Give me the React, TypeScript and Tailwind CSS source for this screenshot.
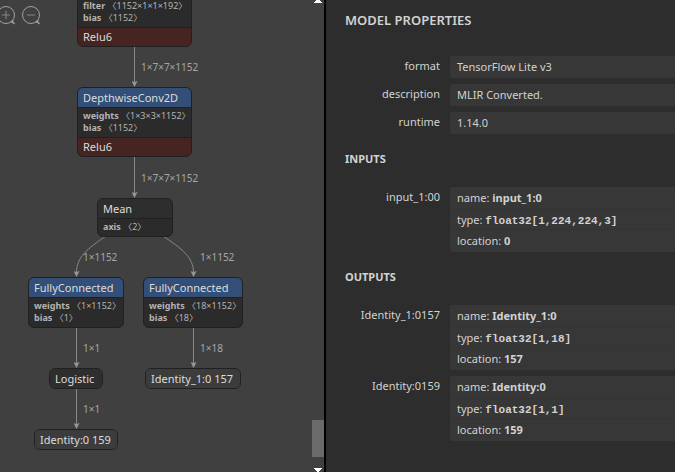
import type { ReactNode } from 'react';

interface Attribute {
  name: string;
  shape: string;
}

interface GraphNode {
  id: string;
  type?: string;
  box: string;
  header?: string;
  attributes: Attribute[];
  activation?: string;
}

const nodes: GraphNode[] = [
  {
    id: 'conv',
    box: 'left-[77px] top-[-4px] w-[115px]',
    attributes: [
      { name: 'filter', shape: '1152×1×1×192' },
      { name: 'bias', shape: '1152' },
    ],
    activation: 'Relu6',
  },
  {
    id: 'depthwise',
    type: 'DepthwiseConv2D',
    box: 'left-[77px] top-[87px] w-[115px]',
    header: 'bg-[#334f78]',
    attributes: [
      { name: 'weights', shape: '1×3×3×1152' },
      { name: 'bias', shape: '1152' },
    ],
    activation: 'Relu6',
  },
  {
    id: 'mean',
    type: 'Mean',
    box: 'left-[97px] top-[198px] w-[76px]',
    header: 'bg-[#2e2e2e]',
    attributes: [{ name: 'axis', shape: '2' }],
  },
  {
    id: 'fc1',
    type: 'FullyConnected',
    box: 'left-[28px] top-[277px] w-[96px]',
    header: 'bg-[#334f78]',
    attributes: [
      { name: 'weights', shape: '1×1152' },
      { name: 'bias', shape: '1' },
    ],
  },
  {
    id: 'fc2',
    type: 'FullyConnected',
    box: 'left-[143px] top-[277px] w-[100px]',
    header: 'bg-[#334f78]',
    attributes: [
      { name: 'weights', shape: '18×1152' },
      { name: 'bias', shape: '18' },
    ],
  },
  {
    id: 'logistic',
    type: 'Logistic',
    box: 'left-[49px] top-[368px] w-[54px]',
    header: 'bg-[#2e2e2e]',
    attributes: [],
  },
  {
    id: 'out1',
    type: 'Identity_1:0 157',
    box: 'left-[145px] top-[368px] w-[96px]',
    header: 'bg-[#3c3c3c]',
    attributes: [],
  },
  {
    id: 'out0',
    type: 'Identity:0 159',
    box: 'left-[34px] top-[429px] w-[84px]',
    header: 'bg-[#3c3c3c]',
    attributes: [],
  },
];

const edges = [
  { d: 'M134.5 46V83', label: '1×7×7×1152', x: 141, y: 71 },
  { d: 'M134.5 157V194', label: '1×7×7×1152', x: 141, y: 182 },
  { d: 'M106 236C87 249 76.5 257 76.5 273', label: '1×1152', x: 83, y: 261 },
  { d: 'M163 236C182 249 193.5 257 193.5 273', label: '1×1152', x: 200, y: 261 },
  { d: 'M76.5 327V364', label: '1×1', x: 83, y: 352 },
  { d: 'M193.5 327V364', label: '1×18', x: 200, y: 352 },
  { d: 'M76.5 388V425', label: '1×1', x: 83, y: 413 },
];

const properties = [
  { name: 'format', value: 'TensorFlow Lite v3' },
  { name: 'description', value: 'MLIR Converted.' },
  { name: 'runtime', value: '1.14.0' },
];

const inputs = [{ label: 'input_1:00', name: 'input_1:0', type: 'float32[1,224,224,3]', location: '0' }];

const outputs = [
  { label: 'Identity_1:0157', name: 'Identity_1:0', type: 'float32[1,18]', location: '157' },
  { label: 'Identity:0159', name: 'Identity:0', type: 'float32[1,1]', location: '159' },
];

function NodeBox({ node }: { node: GraphNode }) {
  return (
    <div
      className={`absolute overflow-hidden rounded-md border border-[#202020] bg-[#2b2b2b] whitespace-nowrap ${node.box}`}
    >
      {node.type && (
        <div className={`h-[19px] px-[5px] text-[11px] leading-[19px] text-[#dcdcdc] ${node.header}`}>{node.type}</div>
      )}
      {node.attributes.length > 0 && (
        <div className="border-t border-[#202020] px-[5px] pt-[2px] pb-[3px] text-[9px] leading-3 text-[#b4b4b4]">
          {node.attributes.map((attr) => (
            <div key={attr.name}>
              <b>{attr.name}</b> 〈{attr.shape}〉
            </div>
          ))}
        </div>
      )}
      {node.activation && (
        <div className="h-[19px] border-t border-[#202020] bg-[#462421] px-[5px] text-[11px] leading-[18px] text-[#dcdcdc]">
          {node.activation}
        </div>
      )}
    </div>
  );
}

function ZoomButton({ label, plus }: { label: string; plus?: boolean }) {
  return (
    <button type="button" aria-label={label} className="size-[25px]">
      <svg viewBox="0 0 25 25" className="size-full" fill="none" stroke="#a0a0a0">
        <circle cx="12" cy="12" r="8.5" />
        <path d={plus ? 'M8 12h8M12 8v8' : 'M8 12h8'} stroke="#868686" />
        <path d="M16.5 19.5L19.5 17.5M18 18.5l2.5 2.5" strokeWidth="1.5" />
      </svg>
    </button>
  );
}

function Graph() {
  return (
    <section className="relative min-w-0 flex-1 overflow-hidden">
      <svg className="absolute inset-0 size-full" fill="none">
        <defs>
          <marker id="arrow" viewBox="0 0 6 6" refX="2" refY="3" markerWidth="6" markerHeight="6" orient="auto">
            <path d="M0 0L6 3L0 6L1 3z" fill="#969696" />
          </marker>
        </defs>
        {edges.map((edge) => (
          <g key={edge.d}>
            <path d={edge.d} stroke="#888888" markerEnd="url(#arrow)" />
            <text x={edge.x} y={edge.y} className="fill-[#a6a6a6] text-[10px]">
              {edge.label}
            </text>
          </g>
        ))}
      </svg>
      {nodes.map((node) => (
        <NodeBox key={node.id} node={node} />
      ))}
      <div className="absolute top-[3px] left-[-6px] flex">
        <ZoomButton label="Zoom in" plus />
        <ZoomButton label="Zoom out" />
      </div>
    </section>
  );
}

function Scrollbar() {
  return (
    <div className="flex w-3 shrink-0 flex-col items-center justify-between">
      <svg viewBox="0 0 8 4" className="h-1 w-2 fill-white">
        <path d="M2 0h4v1h1v1h1v1H0V2h1V1h1z" />
      </svg>
      <div className="flex w-full flex-col items-center">
        <div className="mb-[11px] h-[37px] w-full bg-[#6b6b6b]" />
        <svg viewBox="0 0 8 4" className="h-1 w-2 fill-white">
          <path d="M0 0h8v1H7v1H6v1H5v1H3V3H2V2H1V1H0z" />
        </svg>
      </div>
    </div>
  );
}

function Row({ label, children }: { label: string; children: ReactNode }) {
  return (
    <div className="mb-1.5 flex">
      <dt className="mr-2.5 w-[95px] shrink-0 text-right leading-5">{label}</dt>
      <dd className="min-w-0 flex-1 rounded-l-xs bg-[#373737]">{children}</dd>
    </div>
  );
}

function Argument({ arg }: { arg: (typeof inputs)[number] }) {
  return (
    <Row label={arg.label}>
      <div className="h-[22px] px-[7px] leading-[22px]">
        name: <b>{arg.name}</b>
      </div>
      <div className="h-[21px] border-y border-[#343434] px-[7px] leading-[19px]">
        type: <b className="font-['Liberation_Mono',monospace]">{arg.type}</b>
      </div>
      <div className="h-[22px] px-[7px] leading-[22px]">
        location: <b>{arg.location}</b>
      </div>
    </Row>
  );
}

export default function App() {
  return (
    <main className="flex h-screen overflow-hidden bg-[#404040] font-['Noto_Sans','Noto_Sans_CJK_SC',sans-serif]">
      <div className="flex w-[48%] shrink-0">
        <Graph />
        <Scrollbar />
      </div>
      <aside className="min-w-0 flex-1 overflow-hidden border-l-2 border-black bg-[#2d2d2d] pl-[19px] text-[11px] text-[#d2d2d2]">
        <h1 className="mt-2.5 mb-[26px] text-[13px] leading-5 font-semibold">MODEL PROPERTIES</h1>
        <dl>
          {properties.map((prop) => (
            <Row key={prop.name} label={prop.name}>
              <div className="h-[22px] px-[7px] leading-[22px]">{prop.value}</div>
            </Row>
          ))}
        </dl>
        <h2 className="mt-[15px] mb-[18px] leading-5 font-bold">INPUTS</h2>
        <dl>
          {inputs.map((arg) => (
            <Argument key={arg.label} arg={arg} />
          ))}
        </dl>
        <h2 className="mt-[15px] mb-[18px] leading-5 font-bold">OUTPUTS</h2>
        <dl>
          {outputs.map((arg) => (
            <Argument key={arg.label} arg={arg} />
          ))}
        </dl>
      </aside>
    </main>
  );
}
